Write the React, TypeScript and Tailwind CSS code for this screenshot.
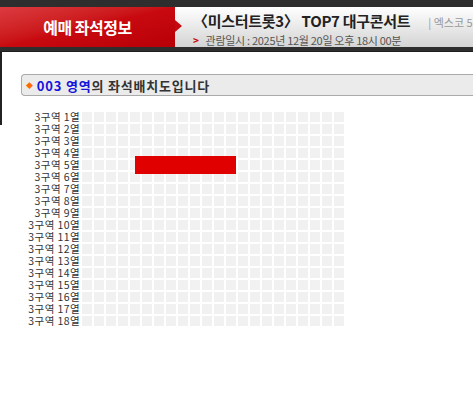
import React from 'react';

const ROWS = Array.from({ length: 18 }, (_, i) => i + 1);
const COLS = Array.from({ length: 22 }, (_, i) => i);

function Header() {
    return (
        <div className="h-[52px] bg-[#2e2e2e] pt-[7px] pb-[5px] border-b-[1px] border-[#1e1e1e]">
            <div className="flex h-[40px]">
                <div className="relative w-[175px] h-full bg-gradient-to-br from-[#dc3a3f] via-[#c80a10] to-[#b80006] flex items-center justify-center">
                    <span className="text-white font-bold text-[16px] tracking-[-0.5px]">예매 좌석정보</span>
                    <span className="absolute right-[-7px] top-[13px] w-0 h-0 border-y-[6px] border-y-transparent border-l-[7px] border-l-[#c40a10]" />
                </div>
                <div className="flex-1 h-full bg-gradient-to-b from-white to-[#d4d4d4] pl-[18px] pt-[4px] overflow-hidden whitespace-nowrap">
                    <div className="flex items-baseline leading-[20px]">
                        <span className="font-bold text-[15px] text-[#222] tracking-[-0.3px]">〈미스터트롯3〉 TOP7 대구콘서트</span>
                        <span className="ml-[18px] text-[11px] text-[#999]">| 엑스코 5관</span>
                    </div>
                    <div className="flex items-center leading-[14px] mt-[1px] text-[11px] text-[#555] tracking-[-0.3px]">
                        <span className="text-[#c00] font-bold text-[10px] mr-[7px]">&gt;</span>
                        관람일시 : 2025년 12월 20일 오후 18시 00분
                    </div>
                </div>
            </div>
        </div>
    );
}

function SeatGrid() {
    return (
        <div className="flex mt-[16px]">
            <div className="w-[80px] -mt-[1px] flex flex-col text-right text-[10.5px] leading-[12px] text-[#333] tracking-[0.4px]">
                {ROWS.map((r) => (
                    <div key={r} className="h-[12px] whitespace-nowrap">
                        3구역 {r}열
                    </div>
                ))}
            </div>
            <div className="relative ml-[2px] flex flex-col gap-[2px]">
                {ROWS.map((r) => (
                    <div key={r} className="flex gap-[2px]">
                        {COLS.map((c) => (
                            <div key={c} className="w-[10px] h-[10px] bg-[#f1f1f1]" />
                        ))}
                    </div>
                ))}
                <div className="absolute left-[53px] top-[44px] w-[101px] h-[18px] bg-[#e00000]" />
            </div>
        </div>
    );
}

export default function App() {
    return (
        <div
            className="w-[473px] h-[417px] bg-white overflow-hidden"
            style={{ fontFamily: '"Noto Sans CJK KR", "Noto Sans", sans-serif' }}
        >
            <Header />
            <div className="relative">
                <div className="absolute left-0 top-0 w-[2px] h-[73px] bg-[#222]" />
                <div className="pt-[22px] pl-[21px]">
                    <div className="h-[22px] border border-r-0 border-[#aaa] rounded-l-[4px] bg-[#ebebeb] flex items-center pl-[4px] text-[13px] font-bold leading-none whitespace-nowrap tracking-[0.8px]">
                        <span className="text-[#ff6a00] text-[7px] mr-[3px]">◆</span>
                        <span className="text-[#1414dc]">003 영역</span>
                        <span className="text-[#333]">의 좌석배치도입니다</span>
                    </div>
                </div>
                <SeatGrid />
            </div>
        </div>
    );
}
